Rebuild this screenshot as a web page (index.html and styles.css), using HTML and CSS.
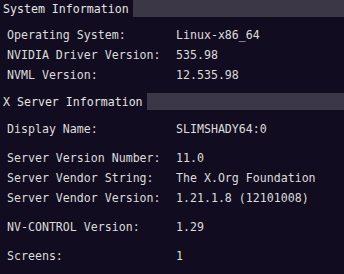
FILE: index.html
```html
<!DOCTYPE html>
<html lang="en">
<head>
  <meta charset="UTF-8">
  <meta name="viewport" content="width=device-width, initial-scale=1.0">
  <title>System Information</title>
  <link rel="stylesheet" href="styles.css">
</head>
<body>
  <div class="section">
    <div class="section-header">
      <span class="section-title">System Information</span>
      <div class="section-bar"></div>
    </div>
    <div class="group first">
      <div class="row"><span class="label">Operating System:</span><span class="value">Linux-x86_64</span></div>
      <div class="row"><span class="label">NVIDIA Driver Version:</span><span class="value">535.98</span></div>
      <div class="row"><span class="label">NVML Version:</span><span class="value">12.535.98</span></div>
    </div>
  </div>

  <div class="section">
    <div class="section-header">
      <span class="section-title">X Server Information</span>
      <div class="section-bar"></div>
    </div>
    <div class="group">
      <div class="row"><span class="label">Display Name:</span><span class="value">SLIMSHADY64:0</span></div>
    </div>
    <div class="group">
      <div class="row"><span class="label">Server Version Number:</span><span class="value">11.0</span></div>
      <div class="row"><span class="label">Server Vendor String:</span><span class="value">The X.Org Foundation</span></div>
      <div class="row"><span class="label">Server Vendor Version:</span><span class="value">1.21.1.8 (12101008)</span></div>
    </div>
    <div class="group">
      <div class="row"><span class="label">NV-CONTROL Version:</span><span class="value">1.29</span></div>
    </div>
    <div class="group">
      <div class="row"><span class="label">Screens:</span><span class="value">1</span></div>
    </div>
  </div>
</body>
</html>
```

FILE: styles.css
```css
body {
  margin: 0;
  background-color: #120c20;
  color: #dcdcdc;
  font-family: "DejaVu Sans Mono", "Liberation Mono", monospace;
  font-size: 11.6px;
  height: 274px;
  overflow: hidden;
}

.section {
  margin-bottom: 8px;
}

.section-header {
  display: flex;
  height: 17px;
  line-height: 18px;
}

.section-title {
  padding-left: 3px;
  color: #e4e4e4;
  white-space: nowrap;
}

.section-bar {
  flex: 1;
  margin-left: 4px;
  background-color: #3b3747;
}

.group {
  margin-top: 9px;
}

.group.first {
  margin-top: 8px;
}

.row {
  display: grid;
  grid-template-columns: 169px 1fr;
  padding-left: 7px;
  height: 20px;
  line-height: 20px;
  white-space: nowrap;
}
```
